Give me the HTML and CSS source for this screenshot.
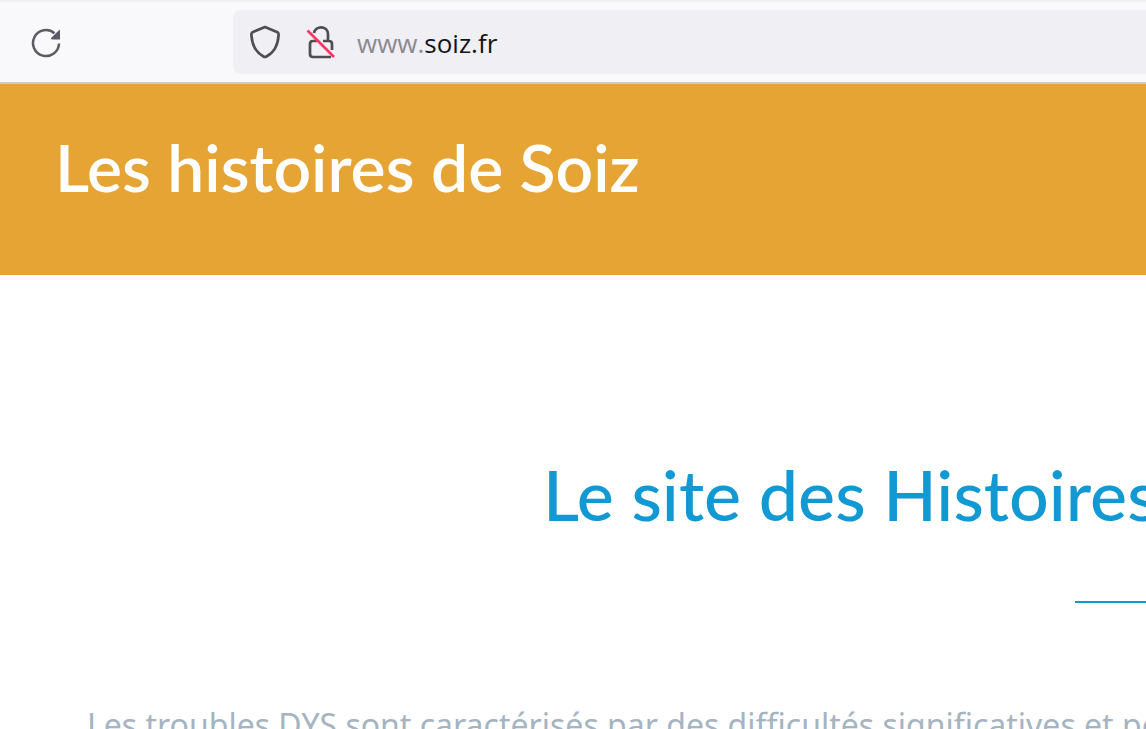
FILE: index.html
```
<!DOCTYPE html>
<html lang="fr">
<head>
<meta charset="UTF-8" />
<meta name="viewport" content="width=device-width, initial-scale=1" />
<title>Les histoires de Soiz</title>
<link rel="stylesheet" href="styles.css">
</head>
<body>

<div class="toolbar">
  <button type="button" class="reload" aria-label="Actualiser">
    <svg width="32" height="32" viewBox="0 0 32 32">
      <path d="M24.5 7.2A13 13 0 1 0 29 17.500" fill="none" stroke="#5b5b66" stroke-width="2.5" />
      <path d="M30 4V13.500H22Q20.300 13 21.300 11.800L29 4.200Q29.600 3.700 30 4Z" fill="#5b5b66" />
    </svg>
  </button>
  <div class="urlbar">
    <svg width="32" height="36" viewBox="0 0 32 36">
      <path d="M16 3L28.500 8.200Q29.800 9 29.600 11C29 21 26 28 17.500 32.500Q16 33.400 14.500 32.500C6 28 3 21 2.400 11Q2.200 9 3.500 8.200Z" fill="none" stroke="#4d4d52" stroke-width="2.7" stroke-linejoin="round" />
    </svg>
    <svg width="32" height="36" viewBox="0 0 32 36">
      <path d="M9 9C10.500 1.300 23 1.300 23 10.500V17M18 17H24Q27 17 27 20V26M12 17H8Q5 17 5 20V30Q5 33 8 33H26" fill="none" stroke="#4d4d52" stroke-width="2.7" />
      <path d="M2.500 6.500L29 33" stroke="#ff3366" stroke-width="2.700" />
    </svg>
    <label class="address"><span>www.</span><input type="text" value="soiz.fr" aria-label="Adresse" /></label>
  </div>
</div>

<header class="banner">
  <h1>Les histoires de Soiz</h1>
</header>

<main>
  <h2>Le site des Histoires</h2>
  <hr class="divider" />
  <p>Les troubles DYS sont caractérisés par des difficultés significatives et pe</p>
</main>

</body>
</html>
```
FILE: styles.css
```
* {
  box-sizing: border-box;
}
body {
  margin: 0;
  height: 100vh;
  overflow: hidden;
  background: #fff;
  font-family: "Noto Sans", sans-serif;
}
.toolbar {
  display: flex;
  align-items: center;
  gap: 171px;
  height: 84px;
  padding-left: 30px;
  background: #f9f9fb;
  border-top: 2px solid #f0f0f2;
  border-bottom: 2px solid #ccc;
}
.reload {
  display: flex;
  flex: none;
  padding: 0;
  border: none;
  background: none;
}
.urlbar {
  display: flex;
  flex: 1;
  align-items: center;
  gap: 24px;
  height: 64px;
  padding-left: 16px;
  border-radius: 8px 0 0 8px;
  background: #f0eff4;
}
.urlbar svg {
  flex: none;
}
.address {
  display: flex;
  flex: 1;
  align-items: center;
  margin-left: -4px;
  padding-top: 2px;
  color: #8a8a90;
  font-family: "Open Sans", sans-serif;
  font-size: 26px;
}
.address input {
  flex: 1;
  min-width: 0;
  padding: 0;
  border: none;
  outline: none;
  background: none;
  color: #15141a;
  font: inherit;
}
.banner {
  padding: 38px 55px 63px;
  background: #e5a434;
}
h1,
h2 {
  margin: 0;
  font-family: Lato, sans-serif;
  line-height: 90px;
  white-space: nowrap;
}
h1 {
  color: #fff;
  font-size: 66px;
  font-weight: 600;
}
main {
  padding: 174px 0 0 87px;
}
h2 {
  padding-left: 456px;
  color: #1099d3;
  font-size: 70px;
  font-weight: 500;
}
.divider {
  height: 2px;
  margin: 62px 0 0 988px;
  border: none;
  background: #1099d3;
}
p {
  margin: 100px 0 0;
  color: #a5b4c1;
  font-size: 32px;
  line-height: 44px;
  white-space: nowrap;
}
```
